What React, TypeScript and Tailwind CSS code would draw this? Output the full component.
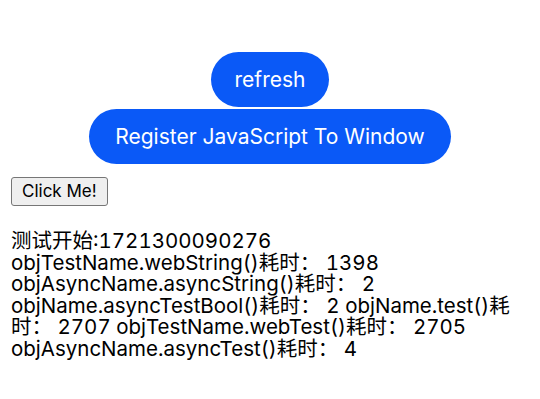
export default function App() {
  const font = { fontFamily: 'Inter, "Noto Sans CJK SC", sans-serif' }
  return (
    <div className="w-[540px] h-[399px] bg-white overflow-hidden" style={font}>
      <div className="flex flex-col items-center pt-[52px] gap-[2px]">
        <button className="h-[55px] px-[24px] rounded-full bg-[#0a59f7] text-white text-[21px]">
          refresh
        </button>
        <button className="h-[55px] px-[26px] rounded-full bg-[#0a59f7] text-white text-[21px]">
          Register JavaScript To Window
        </button>
      </div>
      <div className="pl-[11px] pr-[8px] pt-[13px]">
        <button className="h-[29px] px-[10px] text-[17px] leading-none border border-[#767676] rounded-[3px] bg-[#efefef] text-black">
          Click Me!
        </button>
        <div className="mt-[24px] text-[20.5px] leading-[21.6px] tabular-nums text-black">
          测试开始:1721300090276
          <br />
          objTestName.webString()耗时： 1398
          <br />
          objAsyncName.asyncString()耗时： 2
          <br />
          objName.asyncTestBool()耗时： 2 objName.test()耗时： 2707 objTestName.webTest()耗时： 2705
          <br />
          objAsyncName.asyncTest()耗时： 4
        </div>
      </div>
    </div>
  )
}
